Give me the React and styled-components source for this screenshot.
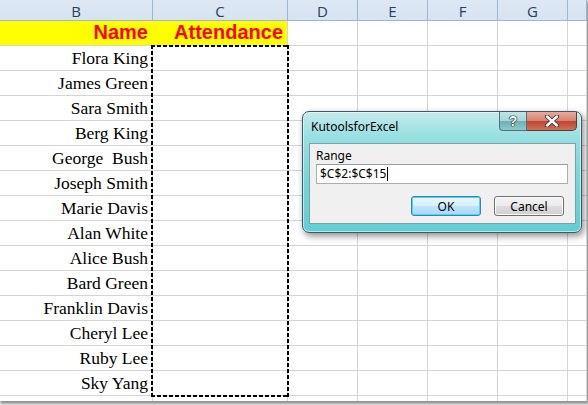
import React from "react";
import styled, { createGlobalStyle } from "styled-components";

const GlobalStyle = createGlobalStyle`
  html, body {
    margin: 0;
    padding: 0;
    background: #ffffff;
  }
  body {
    width: 588px;
    height: 405px;
    overflow: hidden;
  }
`;

const columns = ["B", "C", "D", "E", "F", "G", ""];

const names = [
  "Flora King",
  "James Green",
  "Sara Smith",
  "Berg King",
  "George\u00a0 Bush",
  "Joseph Smith",
  "Marie Davis",
  "Alan White",
  "Alice Bush",
  "Bard Green",
  "Franklin Davis",
  "Cheryl Lee",
  "Ruby Lee",
  "Sky Yang",
  "",
];

function App() {
  return (
    <>
      <GlobalStyle />
      <Sheet>
        <Grid>
          {columns.map((c, i) => (
            <HeadCell key={"h" + i}>{c}</HeadCell>
          ))}

          <Cell $fill="#ffff00" $hideRight>
            <TitleText>Name</TitleText>
          </Cell>
          <Cell $fill="#ffff00">
            <TitleText>Attendance</TitleText>
          </Cell>
          {[0, 1, 2, 3, 4].map((i) => (
            <Cell key={"t" + i} />
          ))}

          {names.map((n, r) => (
            <React.Fragment key={"r" + r}>
              <Cell>
                <NameText>{n}</NameText>
              </Cell>
              {[0, 1, 2, 3, 4, 5].map((i) => (
                <Cell key={i} />
              ))}
            </React.Fragment>
          ))}
        </Grid>

        {/* copy marquee round C3:C16 */}
        <Marquee />

        <Dialog>
          <TitleBar>
            <DialogTitle>KutoolsforExcel</DialogTitle>
            <Controls>
              <HelpButton>?</HelpButton>
              <CloseButton>
                <svg width="16" height="12" viewBox="0 0 16 12">
                  <path
                    d="M3 1.5 L13 10.5 M13 1.5 L3 10.5"
                    stroke="#3a3a3a"
                    strokeWidth="4.2"
                    strokeLinecap="round"
                  />
                  <path
                    d="M3 1.5 L13 10.5 M13 1.5 L3 10.5"
                    stroke="#ffffff"
                    strokeWidth="2.4"
                    strokeLinecap="round"
                  />
                </svg>
              </CloseButton>
            </Controls>
          </TitleBar>
          <Panel>
            <Label>Range</Label>
            <Input>
              $C$2:$C$15<Caret />
            </Input>
            <ButtonRow>
              <Button $default>OK</Button>
              <Button>Cancel</Button>
            </ButtonRow>
          </Panel>
        </Dialog>
      </Sheet>
    </>
  );
}

const Sheet = styled.div`
  position: relative;
  width: 587px;
  height: 401px;
  overflow: hidden;
  background: #ffffff;
  box-shadow: 1px 2px 3px 1px rgba(0, 0, 0, 0.45);
`;

const Grid = styled.div`
  display: grid;
  grid-template-columns: 153px 135px 70px 70px 70px 70px 1fr;
  grid-template-rows: 21px 25px repeat(15, 25px);
`;

const HeadCell = styled.div`
  display: flex;
  align-items: center;
  justify-content: center;
  box-sizing: border-box;
  background: linear-gradient(#dde8f4, #d6e3f1);
  border-right: 1px solid #9eb6ce;
  border-bottom: 1px solid #9eb6ce;
  font-family: "Open Sans", "Liberation Sans", sans-serif;
  font-size: 15px;
  color: #27405e;
  padding-top: 1px;
`;

const Cell = styled.div`
  display: flex;
  align-items: flex-end;
  justify-content: flex-end;
  box-sizing: border-box;
  overflow: hidden;
  background: ${(p) => p.$fill || "#ffffff"};
  border-right: 1px solid ${(p) => (p.$hideRight ? p.$fill : "#d4d4d4")};
  border-bottom: 1px solid #d4d4d4;
  padding: 0 4px 1px 0;
`;

const TitleText = styled.span`
  font-family: "Liberation Sans", Arial, sans-serif;
  font-weight: bold;
  font-size: 20px;
  line-height: 24px;
  color: #ff0000;
`;

const NameText = styled.span`
  font-family: "Liberation Serif", "Times New Roman", serif;
  font-size: 17.5px;
  line-height: 22px;
  color: #000000;
  white-space: pre;
`;

const dashH = "repeating-linear-gradient(90deg, #000 0 4px, transparent 4px 6px)";
const dashV = "repeating-linear-gradient(180deg, #000 0 4px, transparent 4px 6px)";

const Marquee = styled.div`
  position: absolute;
  left: 151px;
  top: 45px;
  width: 138px;
  height: 352px;
  pointer-events: none;
  background: ${dashH} left top / 100% 2px no-repeat,
    ${dashH} left bottom / 100% 2px no-repeat,
    ${dashV} left top / 2px 100% no-repeat,
    ${dashV} right top / 2px 100% no-repeat;
`;

const Dialog = styled.div`
  position: absolute;
  left: 302px;
  top: 111px;
  width: 280px;
  height: 122px;
  box-sizing: border-box;
  border: 1px solid #3f5963;
  border-radius: 7px;
  padding: 0 5px 8px 6px;
  display: flex;
  flex-direction: column;
  background: linear-gradient(#c4eaec 0%, #95dfe1 22%, #72d5d8 60%, #5fcfd3 100%);
  box-shadow: inset 0 0 0 1px rgba(255, 255, 255, 0.55),
    2px 3px 7px rgba(0, 0, 0, 0.45);
  font-family: "Noto Sans", "Open Sans", sans-serif;
`;

const TitleBar = styled.div`
  height: 31px;
  display: flex;
  align-items: flex-start;
`;

const DialogTitle = styled.div`
  font-size: 12px;
  line-height: 16px;
  padding: 7px 0 0 2px;
  color: #000000;
`;

const Controls = styled.div`
  margin-left: auto;
  margin-right: -1px;
  display: flex;
`;

const HelpButton = styled.div`
  width: 28px;
  height: 19px;
  box-sizing: border-box;
  border: 1px solid #4f7378;
  border-top: none;
  border-radius: 0 0 0 4px;
  background: linear-gradient(#c0e5e6 0%, #a6d7d9 48%, #6fb1b4 52%, #8cc9cb 100%);
  display: flex;
  align-items: center;
  justify-content: center;
  font-family: "Liberation Sans", Arial, sans-serif;
  font-weight: bold;
  font-size: 14px;
  color: #ffffff;
  text-shadow: 0 0 1px #222, 0 0 1px #222, 0 0 1px #222, 0 0 1px #222;
`;

const CloseButton = styled.div`
  width: 50px;
  height: 19px;
  box-sizing: border-box;
  border: 1px solid #5b3a35;
  border-top: none;
  border-left: none;
  border-radius: 0 0 5px 0;
  background: linear-gradient(#e9a99c 0%, #d88370 48%, #bf4630 52%, #d0705c 100%);
  display: flex;
  align-items: center;
  justify-content: center;
`;

const Panel = styled.div`
  flex: 1;
  box-sizing: border-box;
  background: #f0f0f0;
  border: 1px solid #7f9ea6;
  padding: 4px 7px 0 6px;
  display: flex;
  flex-direction: column;
`;

const Label = styled.div`
  font-size: 12px;
  line-height: 16px;
  color: #000000;
  height: 16px;
`;

const Input = styled.div`
  height: 20px;
  box-sizing: border-box;
  background: #ffffff;
  border: 1px solid #abadb3;
  border-top-color: #9a9ca3;
  padding: 0 3px;
  font-size: 12px;
  line-height: 18px;
  color: #000000;
  display: flex;
  align-items: center;
`;

const Caret = styled.span`
  display: inline-block;
  width: 1px;
  height: 14px;
  margin-left: 1px;
  background: #000000;
`;

const ButtonRow = styled.div`
  margin-top: 12px;
  display: flex;
  justify-content: flex-end;
  gap: 13px;
  padding-right: 4px;
`;

const Button = styled.div`
  width: 70px;
  height: 20px;
  box-sizing: border-box;
  border-radius: 3px;
  border: 1px solid ${(p) => (p.$default ? "#3c7fb1" : "#707070")};
  background: ${(p) =>
    p.$default
      ? "linear-gradient(#eaf6fd 0%, #d9f0fc 48%, #bee6fd 52%, #a7d9f5 100%)"
      : "linear-gradient(#f2f2f2 0%, #ebebeb 48%, #dddddd 52%, #cfcfcf 100%)"};
  box-shadow: inset 0 0 0 1px ${(p) => (p.$default ? "#48d8fb" : "#fcfcfc")};
  display: flex;
  align-items: center;
  justify-content: center;
  font-size: 12px;
  color: #000000;
`;

export default App;
